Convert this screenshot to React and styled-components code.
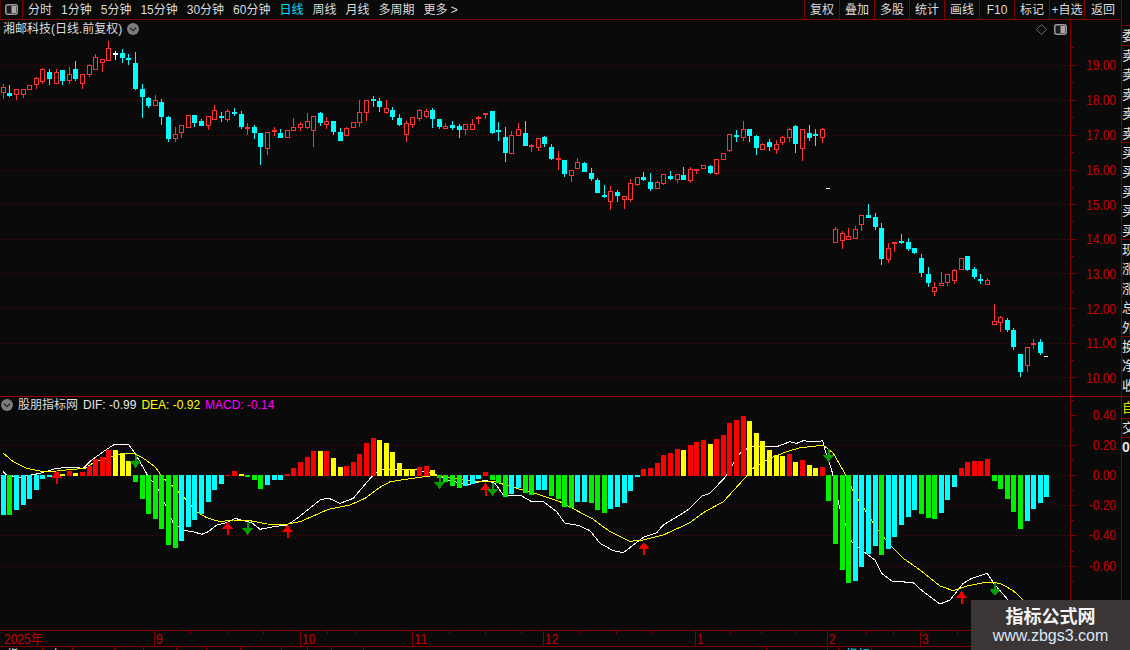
import React from "react";
import styled, { createGlobalStyle } from "styled-components";

const LINE = "#800000";
const BG = "#0a0a0a";
const LATIN = '"Liberation Sans", "Noto Sans CJK SC", sans-serif';

const Global = createGlobalStyle`
  html, body { margin: 0; padding: 0; background: ${BG}; }
`;

const Page = styled.div`
  position: relative;
  display: flex;
  width: 1130px;
  height: 650px;
  overflow: hidden;
  background: ${BG};
  color: #dcdcdc;
  font: 12px/14px ${LATIN};
`;
const Main = styled.div`
  display: flex;
  flex-direction: column;
  width: 1121px;
`;
const Toolbar = styled.header`
  display: flex;
  align-items: stretch;
  justify-content: space-between;
  height: 19px;
  flex: none;
  border-bottom: 1px solid ${LINE};
`;
const ToolGroup = styled.div`
  display: flex;
  align-items: center;
  gap: ${(p) => p.$gap || 0}px;
`;
const ToggleCell = styled.div`
  display: flex;
  align-items: center;
  justify-content: center;
  width: 23px;
  height: 19px;
  box-sizing: border-box;
  border-left: 1px solid #5a0000;
  border-right: 1px solid ${LINE};
  margin-right: -4px;
`;
const NavItem = styled.span`
  color: ${(p) => (p.$active ? "#00e0ff" : "#dcdcdc")};
  white-space: nowrap;
`;
const ToolButton = styled.button`
  width: ${(p) => p.$w || 35}px;
  height: 19px;
  padding: 0;
  background: none;
  border: 0;
  border-left: 1px solid ${LINE};
  color: #dcdcdc;
  font: inherit;
  text-align: center;
`;
const Pane = styled.section`
  display: flex;
  flex: none;
  height: ${(p) => p.$h}px;
  border-bottom: 1px solid ${(p) => p.$line || LINE};
`;
const Plot = styled.div`
  position: relative;
  flex: 1;
  min-width: 0;
  svg { display: block; }
`;
const Axis = styled.div`
  width: 50px;
  flex: none;
  border-left: 1px solid ${LINE};
  svg { display: block; }
`;
const PaneTitle = styled.div`
  position: absolute;
  left: ${(p) => p.$left}px;
  top: ${(p) => p.$top}px;
  display: flex;
  align-items: center;
  gap: ${(p) => p.$gap}px;
  white-space: nowrap;
`;
const LegendValue = styled.span`
  color: ${(p) => p.$color};
`;
const CornerIcons = styled.div`
  position: absolute;
  right: 3px;
  top: 4px;
  display: flex;
  align-items: center;
  gap: 7px;
`;
const TimeAxis = styled.div`
  flex: none;
  height: 15px;
  border-bottom: 1px solid ${LINE};
  svg { display: block; }
`;
const TabRow = styled.nav`
  display: flex;
  flex: none;
  height: 3px;
  overflow: hidden;
`;
const Tab = styled.span`
  flex: none;
  width: ${(p) => p.$w}px;
  box-sizing: border-box;
  height: 3px;
  padding: 1px 0 0 7px;
  border-right: 1px solid ${LINE};
  color: ${(p) => p.$color || "#e8e8e8"};
  white-space: nowrap;
  overflow: hidden;
`;
const Info = styled.aside`
  flex: none;
  width: 9px;
  box-sizing: border-box;
  padding-top: 25px;
  border-left: 1px solid ${LINE};
  overflow: hidden;
`;
const InfoBlock = styled.div`
  box-sizing: border-box;
  width: 8px;
  height: ${(p) => p.$h}px;
  border-top: 1px solid ${LINE};
  overflow: hidden;
  color: ${(p) => p.$color || "#e6e6e6"};
  font: ${(p) => (p.$bold ? "bold 14px" : "13px")}/${(p) => p.$lh || 19.4}px ${LATIN};
`;
const InfoLabel = styled.div`
  white-space: nowrap;
`;
const Watermark = styled.div`
  position: absolute;
  right: 0;
  bottom: 0;
  width: 159px;
  height: 50px;
  display: flex;
  flex-direction: column;
  align-items: center;
  background: #3b3535;
`;
const WatermarkTitle = styled.div`
  margin-top: 5px;
  color: #f4f4f4;
  font: bold 18px/20px "Noto Sans CJK SC", sans-serif;
`;
const WatermarkUrl = styled.div`
  margin-top: 2px;
  color: #dbe7f6;
  font: 16px/18px "Liberation Sans", sans-serif;
`;

// candles: [colour, high, bodyTop, bodyBottom, low], index = trading day
const C = [
  ["r",84,87,93,99],["c",85,93,96,97],["r",89,89,95,100],["r",89,89,95,98],["r",85,85,90,90],["r",77,78,85,89],["r",68,69,82,84],["c",69,72,79,85],["r",69,72,84,84],["c",70,70,81,85],
  ["r",67,74,81,84],["c",61,69,79,81],["r",74,74,84,89],["r",64,65,75,77],["r",54,57,70,70],["r",59,59,63,72],["r",41,48,61,61],["w",51,54,54,60],["c",49,53,58,63],["c",54,59,59,65],
  ["c",52,63,89,90],["c",84,89,97,118],["c",97,98,106,108],["r",95,100,106,106],["c",99,102,117,125],["c",116,117,139,142],["r",127,134,139,142],["r",125,125,133,138],["r",115,115,128,128],["c",115,115,123,127],
  ["c",119,121,126,126],["r",116,116,126,130],["r",105,110,120,120],["c",112,117,117,122],["r",109,111,120,122],["c",108,113,113,116],["c",111,114,127,129],["r",123,128,128,135],["c",125,127,133,139],["c",133,133,147,165],
  ["r",132,132,149,155],["r",127,131,131,136],["c",129,133,138,138],["r",130,130,138,138],["r",118,127,131,131],["r",122,124,128,131],["r",113,121,128,129],["r",116,116,131,147],["c",112,113,123,126],["r",117,121,125,129],
  ["c",121,121,132,135],["c",128,132,141,141],["r",127,128,136,136],["r",122,122,128,128],["r",100,112,123,127],["r",100,100,113,121],["c",96,100,100,107],["c",98,101,107,112],["r",100,108,113,114],["c",107,110,117,120],
  ["c",114,118,125,126],["r",121,123,135,142],["r",117,117,125,128],["r",109,110,119,121],["r",109,111,117,118],["c",108,110,119,128],["c",119,119,127,129],["r",123,126,129,129],["c",121,125,128,130],["c",124,126,130,138],
  ["r",124,124,130,135],["r",119,124,130,130],["r",116,118,118,124],["r",114,114,114,119],["c",111,111,133,134],["c",122,131,131,141],["c",127,137,153,162],["r",131,135,154,154],["r",123,129,136,136],["c",121,133,146,146],
  ["r",144,146,146,152],["r",138,138,148,151],["c",136,137,144,147],["c",144,147,159,160],["r",151,159,159,170],["c",160,160,174,177],["r",170,170,176,182],["r",158,162,169,169],["c",162,163,172,172],["c",168,173,179,181],
  ["c",178,180,193,193],["c",185,196,196,198],["r",186,191,202,210],["c",190,192,196,202],["r",196,196,200,209],["r",179,183,200,202],["r",177,177,185,186],["c",172,177,180,181],["c",173,182,189,191],["r",181,182,189,189],
  ["r",174,174,184,185],["c",171,176,179,180],["r",174,174,180,183],["c",167,175,180,180],["r",167,169,181,183],["r",169,169,171,174],["r",165,165,169,169],["c",165,166,173,174],["r",159,159,174,175],["r",153,153,160,160],
  ["r",134,134,151,152],["c",130,136,136,142],["r",121,129,138,141],["c",129,129,136,142],["c",135,136,148,155],["r",143,144,150,150],["c",139,142,147,151],["r",140,144,150,154],["r",136,137,143,145],["r",128,129,138,142],
  ["c",125,126,144,153],["r",129,129,149,161],["c",125,133,138,141],["c",129,135,135,146],["r",128,129,138,143],["w",188,188,188,188],
  ["r",227,229,243,243],["r",231,233,241,249],["r",228,236,240,240],["r",226,229,239,239],["r",215,215,225,231],["c",204,215,218,218],["c",213,217,227,230],["c",223,228,259,265],["r",243,248,260,263],["r",243,243,243,252],
  ["c",234,242,242,244],["c",238,242,249,251],["c",248,248,253,254],["c",254,258,273,277],["c",267,274,283,287],["r",282,287,292,296],["r",272,283,286,286],["r",274,274,283,286],["r",269,270,281,284],["r",258,258,270,270],
  ["c",256,256,270,271],["c",267,269,277,279],["c",274,280,280,284],["r",278,280,285,285],["r",304,321,325,325],["r",316,317,323,332],["c",318,320,330,332],["c",328,330,347,350],["c",354,354,372,377],["r",347,347,366,372],
  ["r",339,344,344,349],["c",339,342,353,355],["w",356,356,356,356],
];

// histogram: [colour, far end y]; zero line at y=475/476
const H = [
  ["c",515],["g",515],["c",510],["c",505],["c",499],["c",490],["c",479],["c",477],["r",472],["y",474],["r",471],["y",473],["r",472],["r",466],["r",459],["r",457],["r",450],["y",450],["y",454],["y",461],
  ["g",482],["g",499],["g",514],["g",519],["g",529],["g",545],["g",548],["c",541],["c",527],["c",520],["c",514],["c",502],["c",490],["c",484],["r",475],["r",471],["y",474],["g",477],["g",480],["g",489],
  ["c",485],["c",480],["c",480],["r",474],["r",468],["r",462],["r",457],["r",451],["y",451],["r",451],["y",458],["y",467],["r",466],["r",462],["r",454],["r",443],["r",438],["y",440],["y",443],["y",452],
  ["y",463],["y",469],["y",469],["r",467],["r",466],["y",470],["g",478],["g",482],["g",486],["g",488],["c",486],["c",484],["c",479],["r",472],["g",480],["g",483],["g",497],["c",494],["c",488],["g",493],
  ["g",495],["c",490],["c",490],["g",496],["g",499],["g",507],["g",508],["c",502],["c",502],["g",503],["g",510],["g",513],["c",509],["c",507],["c",503],["c",491],["c",477],["r",469],["r",468],["r",463],
  ["r",455],["r",453],["r",449],["y",450],["r",445],["r",442],["r",440],["y",444],["r",439],["r",435],["r",423],["r",420],["r",416],["y",421],["y",433],["y",441],["y",450],["y",455],["y",456],["r",454],
  ["y",462],["r",460],["y",465],["y",468],["r",467],["g",501],["g",544],["g",570],["g",583],["c",581],["c",567],["c",554],["c",546],["g",555],["c",549],["c",537],["c",525],["c",517],["c",510],["g",514],
  ["g",518],["g",519],["c",513],["c",500],["c",487],["r",468],["r",462],["r",461],["r",461],["r",459],["g",481],["g",489],["g",499],["g",512],["g",529],["c",521],["c",509],["c",503],["c",497],
];

const zoomPts = (ox, oy, pts) => pts.map(([x, y]) => [ox + x / 3, oy + y / 3]);
const DIF = [
  ...zoomPts(0, 390, [[10,245],[20,255],[60,262],[120,250],[170,235],[215,232],[250,235],[275,210],[320,178],[345,162],[385,162],[405,190],[425,225],[445,260],[470,290],[490,330],[520,400],[555,422],[580,425],[605,433],[625,425],[650,405],[680,398],[705,385],[730,392],[755,398],[780,418],[820,410],[860,405],[885,390],[920,362],[960,330],[985,324],[1020,340],[1060,325],[1085,295],[1115,260]]),
  ...zoomPts(380, 400, [[0,208],[60,208],[100,208],[165,222],[205,240],[260,255],[290,248],[315,240],[345,250],[370,285],[400,288],[420,285],[455,305],[490,305],[530,335],[555,370],[595,376],[630,392],[660,430],[700,452],[730,458],[760,435],[790,412],[830,398],[850,375],[900,345],[930,325],[965,288],[990,280],[1035,232],[1060,190],[1080,160],[1110,140]]),
  ...zoomPts(750, 400, [[50,140],[80,140],[120,125],[140,130],[160,122],[200,126],[218,122],[225,150],[245,210],[268,320],[285,370],[305,425],[345,458],[375,480],[395,520],[425,543],[490,548],[520,575],[570,612],[600,600],[640,550],[665,535],[712,520],[735,555],[770,595],[800,640]]),
];
const DEA = [
  ...zoomPts(0, 390, [[10,190],[40,215],[80,235],[120,243],[170,243],[220,238],[255,235],[285,215],[320,205],[360,192],[400,190],[430,205],[465,230],[490,265],[520,290],[555,325],[590,365],[620,383],[660,395],[700,390],[750,392],[800,402],[860,403],[900,395],[940,378],[985,358],[1050,345],[1095,325]]),
  ...zoomPts(380, 400, [[0,262],[30,245],[90,236],[165,226],[230,235],[280,245],[345,245],[400,262],[470,282],[540,305],[640,358],[690,395],[750,424],[790,420],[850,405],[930,368],[970,338],[1030,305],[1100,228]]),
  ...zoomPts(750, 400, [[0,210],[60,175],[110,155],[150,143],[220,136],[250,160],[290,230],[310,275],[345,330],[380,385],[420,435],[460,475],[510,510],[570,558],[610,572],[650,558],[710,546],[750,550],[790,572],[820,600],[860,640]]),
];

const UP = [[56.5,471],[227.5,522],[287.5,525],[485.5,483],[644,542],[961.5,591]];
const DOWN = [[135.5,455],[247.5,522],[439.5,476],[492.5,483],[828.5,449],[995,583]];

const PRICE_COLOR = { r: "#ff3333", c: "#00ffff", w: "#ffffff" };
const BAR_COLOR = { r: "#ff0000", c: "#00ffff", g: "#00f000", y: "#ffff00" };
const cx = (n) => Math.floor(3.3 + 6.605 * n) + 0.5;
const toPath = (pts) => pts.map(([x, y], i) => `${i ? "L" : "M"}${x.toFixed(1)} ${y.toFixed(1)}`).join("");

function Candle({ n, data }) {
  const [c, hi, top, bot, lo] = data;
  const x = cx(n);
  const color = PRICE_COLOR[c];
  const wicks = (
    <>
      {hi < top && <path d={`M${x} ${hi}V${top}`} stroke={color} />}
      {lo > bot && <path d={`M${x} ${bot}V${lo}`} stroke={color} />}
    </>
  );
  if (top === bot) {
    const bare = hi === lo;
    return (
      <g>
        {wicks}
        {bare ? (
          <rect x={x - 2.5} y={top} width="4" height="1" fill={color} />
        ) : (
          <rect x={x - 2.5} y={top - 1} width="5" height="2" fill={color} />
        )}
      </g>
    );
  }
  return (
    <g>
      {wicks}
      {c === "r" ? (
        <rect x={x - 2} y={top + 0.5} width="4" height={Math.max(bot - top - 1, 1)} fill={BG} stroke={color} />
      ) : (
        <rect x={x - 2.5} y={top} width="5" height={bot - top} fill={color} />
      )}
    </g>
  );
}

const PRICE_LEVELS = [[65,"19.00"],[100,"18.00"],[135,"17.00"],[170,"16.00"],[204.5,"15.00"],[239,"14.00"],[273.5,"13.00"],[308.5,"12.00"],[343,"11.00"],[377.5,"10.00"]];
const IND_LEVELS = [[415,"0.40"],[445,"0.20"],[475,"0.00"],[505,"-0.20"],[535,"-0.40"],[566,"-0.60"]];

// narrow, tall figures of the terminal's bitmap font: 14px glyphs at 12px advance
const narrowWidth = (s) =>
  [...s].reduce((w, ch) => w + (ch === "." ? 3.3 : ch === "-" ? 4 : ch === "年" ? 12 : 6.67), 0);

function PriceChart() {
  return (
    <svg width="1070" height="376" viewBox="0 20 1070 376" shapeRendering="crispEdges" fill="none">
      {PRICE_LEVELS.map(([y]) => (
        <line key={y} x1="0" x2="1070" y1={Math.floor(y) + 0.5} y2={Math.floor(y) + 0.5} stroke="#521010" strokeDasharray="1 3" />
      ))}
      {C.map((d, n) => (
        <Candle key={n} n={n} data={d} />
      ))}
    </svg>
  );
}

function MacdChart() {
  return (
    <svg width="1070" height="232" viewBox="0 397 1070 232" shapeRendering="crispEdges" fill="none">
      {IND_LEVELS.slice(1).map(([y]) => (
        <line key={y} x1="0" x2="1070" y1={y + 0.5} y2={y + 0.5} stroke="#521010" strokeDasharray="1 3" />
      ))}
      <path d={toPath(DIF)} stroke="#ffffff" />
      <path d={toPath(DEA)} stroke="#ffff00" />
      {H.map(([c, y], n) => {
        const x = cx(n) - 2.5;
        const pos = y < 476;
        return (
          <rect key={n} x={x} y={pos ? y : 475} width="5" height={pos ? 476 - y : y - 475} fill={BAR_COLOR[c]} />
        );
      })}
      {UP.map(([x, y]) => (
        <path key={x} d={`M${x} ${y}l5.5 7h-4.5v6h-2v-6h-4.5z`} fill="#f00000" />
      ))}
      {DOWN.map(([x, y]) => (
        <path key={x} d={`M${x - 1} ${y}h2v6h4.5l-5.5 7l-5.5-7h4.5z`} fill="#00a000" />
      ))}
    </svg>
  );
}

function AxisScale({ levels, height, offset }) {
  const ys = levels.map(([y]) => y);
  const step = ys[1] - ys[0];
  const mids = [...ys, ys[ys.length - 1] + step].map((y) => y - step / 2);
  return (
    <svg width="50" height={height} viewBox={`0 ${offset} 50 ${height}`} fill="none">
      <g shapeRendering="crispEdges">
        {ys.map((y) => (
          <path key={y} d={`M0 ${Math.floor(y) + 0.5}h6`} stroke={LINE} />
        ))}
        {mids.map((y) => (
          <path key={y} d={`M0 ${Math.floor(y) + 0.5}h3`} stroke={LINE} />
        ))}
      </g>
      {levels.map(([y, label]) => (
        <text
          key={label}
          x={45 - narrowWidth(label)}
          y={y + 5}
          textLength={narrowWidth(label)}
          lengthAdjust="spacingAndGlyphs"
          fill="#c80000"
          fontSize="14"
          fontFamily="Liberation Sans, sans-serif"
        >
          {label}
        </text>
      ))}
    </svg>
  );
}

const MONTHS = [[3,"2025年",false],[155,"9",true],[301,"10",true],[413,"11",true],[544,"12",true],[696,"1",true],[828,"2",true],[921,"3",true]];
const MINOR = [190,227,263,327,355,449,485,521,580,616,652,730,761,795,866,893,957,1000,1037];

function TimeScale() {
  return (
    <svg width="1121" height="15" viewBox="0 631 1121 15" fill="none">
      <g shapeRendering="crispEdges">
        {MONTHS.filter((m) => m[2]).map(([x]) => (
          <path key={x} d={`M${x - 1 + 0.5} 631v15`} stroke={LINE} />
        ))}
        {MINOR.map((x) => (
          <path key={x} d={`M${x + 0.5} 631v3`} stroke={LINE} />
        ))}
      </g>
      {MONTHS.map(([x, label]) => (
        <text
          key={x}
          x={x + 1}
          y="644"
          textLength={narrowWidth(label)}
          lengthAdjust="spacingAndGlyphs"
          fill="#c80000"
          fontSize="14"
          fontFamily="Liberation Sans, Noto Sans CJK SC, sans-serif"
        >
          {label}
        </text>
      ))}
    </svg>
  );
}

const PanelIcon = () => (
  <svg width="13" height="11" viewBox="0 0 13 11">
    <rect x="0.75" y="0.75" width="11.5" height="9.5" rx="2" fill="#1c1c1c" stroke="#9a9a9a" strokeWidth="1.5" />
    <rect x="6.5" y="2" width="4.5" height="7" fill="#a8a8a8" />
  </svg>
);
const DiamondIcon = () => (
  <svg width="11" height="11" viewBox="0 0 11 11" fill="none">
    <path d="M5.5.5l5 5-5 5-5-5z" stroke="#6c6c6c" />
  </svg>
);
const DropIcon = () => (
  <svg width="12" height="12" viewBox="0 0 12 12" fill="none">
    <circle cx="6" cy="6" r="6" fill="#7c7c7c" />
    <path d="M3 4.8l3 2.8 3-2.8" stroke="#222" strokeWidth="1.2" />
  </svg>
);

const NAV = ["分时","1分钟","5分钟","15分钟","30分钟","60分钟","日线","周线","月线","多周期","更多 >"];
const ACTIONS = ["复权","叠加","多股","统计","画线","F10","标记","+自选"];
const TABS = [
  { w: 43, label: "指" }, { w: 30, label: "上" }, { w: 42 }, { w: 29 }, { w: 33 }, { w: 30 }, { w: 34 }, { w: 41 },
  { w: 26 }, { w: 24 }, { w: 32 }, { w: 403 }, { w: 61 }, { w: 11 }, { w: 33, label: "指标", color: "#00e0ff" },
];
const INFO = [
  { h: 20, labels: ["委比"] },
  { h: 97, labels: ["卖五","卖四","卖三","卖二","卖一"] },
  { h: 97, labels: ["买一","买二","买三","买四","买五"] },
  { h: 97, labels: ["现价","涨跌","涨幅","总手","外盘"] },
  { h: 60, labels: ["换手","净资","收益"] },
  { h: 22, labels: ["自选"], color: "#e0e000", lh: 21 },
  { h: 19, labels: ["交易"], lh: 18 },
  { h: 20, labels: ["0"], bold: true, lh: 18 },
];

export default function App() {
  return (
    <Page>
      <Global />
      <Main>
        <Toolbar>
          <ToolGroup $gap={9}>
            <ToggleCell><PanelIcon /></ToggleCell>
            {NAV.map((t) => (
              <NavItem key={t} $active={t === "日线"}>{t}</NavItem>
            ))}
          </ToolGroup>
          <ToolGroup>
            {ACTIONS.map((t) => (
              <ToolButton key={t}>{t}</ToolButton>
            ))}
            <ToolButton $w={37}>返回</ToolButton>
          </ToolGroup>
        </Toolbar>
        <Pane $h={376} $line="#a00000">
          <Plot>
            <PriceChart />
            <PaneTitle $left={3} $top={2} $gap={5}>
              <span>湘邮科技(日线.前复权)</span>
              <DropIcon />
            </PaneTitle>
            <CornerIcons>
              <DiamondIcon />
              <PanelIcon />
            </CornerIcons>
          </Plot>
          <Axis><AxisScale levels={PRICE_LEVELS} height={376} offset={20} /></Axis>
        </Pane>
        <Pane $h={233}>
          <Plot>
            <MacdChart />
            <PaneTitle $left={1} $top={1} $gap={5}>
              <DropIcon />
              <LegendValue $color="#dcdcdc">股朋指标网</LegendValue>
              <LegendValue $color="#e8e8e8">DIF: -0.99</LegendValue>
              <LegendValue $color="#ffff00">DEA: -0.92</LegendValue>
              <LegendValue $color="#ff00ff">MACD: -0.14</LegendValue>
            </PaneTitle>
          </Plot>
          <Axis><AxisScale levels={IND_LEVELS} height={233} offset={397} /></Axis>
        </Pane>
        <TimeAxis><TimeScale /></TimeAxis>
        <TabRow>
          {TABS.map((t, i) => (
            <Tab key={i} $w={t.w} $color={t.color}>{t.label}</Tab>
          ))}
        </TabRow>
      </Main>
      <Info>
        {INFO.map((b, i) => (
          <InfoBlock key={i} $h={b.h} $color={b.color} $lh={b.lh} $bold={b.bold}>
            {b.labels.map((l) => (
              <InfoLabel key={l}>{l}</InfoLabel>
            ))}
          </InfoBlock>
        ))}
      </Info>
      <Watermark>
        <WatermarkTitle>指标公式网</WatermarkTitle>
        <WatermarkUrl>www.zbgs3.com</WatermarkUrl>
      </Watermark>
    </Page>
  );
}
